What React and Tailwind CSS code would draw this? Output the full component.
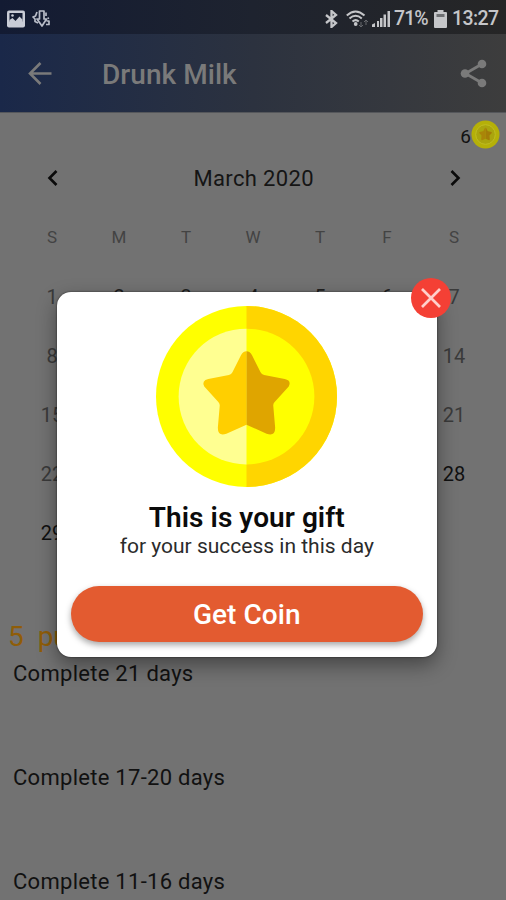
import React from "react";

const weekdays = ["S", "M", "T", "W", "T", "F", "S"];

const STAR_RIGHT =
  "M0-45Q3.500-45 5.500-41L14-24Q15-22 17.500-21.500L38-17.500Q45-16 42-10L28 5.500Q26.500 7 26.600 9L28.500 31Q28.500 40 20 37L0 28Z";

function Coin({ className }) {
  return (
    <svg className={className} viewBox="-90 -90 180 180">
      <circle r="90" fill="#ffff00" />
      <path d="M0-90A90 90 0 0 1 0 90Z" fill="#ffd500" />
      <circle r="67.500" fill="#ffff00" />
      <path d="M0-67.500A67.500 67.500 0 0 0 0 67.500Z" fill="#ffff91" />
      <path d={STAR_RIGHT} transform="scale(-1 1)" fill="#ffcf00" />
      <path d={STAR_RIGHT} fill="#dfa500" />
    </svg>
  );
}

function StatusBar() {
  return (
    <div className="flex h-[34px] items-center bg-linear-to-r from-[#131b33] via-[#1e232f] to-[#262626] pt-[3px] text-[#c5c6c9]">
      <svg className="ml-[7px] h-[18px] w-[18px]" viewBox="0 0 18 18">
        <rect width="18" height="17" y=".5" rx="2" fill="#c9ccd6" />
        <rect x="2.500" y="3" width="13" height="8.500" fill="#151d34" />
        <path d="M2.500 13V10l3-2 3 3 4-4.500 3 3V13Z" fill="#c9ccd6" />
        <circle cx="5.500" cy="5.500" r="1.300" fill="#c9ccd6" />
      </svg>
      <svg className="ml-[7px] h-[18px] w-[19px]" viewBox="0 0 19 18" fill="none" stroke="#b9bdc8" strokeWidth="1.700" strokeLinejoin="round">
        <path d="M7.500 9V1h4.500v8h2.500L10 16 5 9ZM5 2 3.500 6 1 7l2 2v2.500l3 1.500M14 2.500V6M16 7.500l.5 1.500M14.500 11h2.500v3.500h-3" />
      </svg>
      <div className="ml-auto flex items-center">
        <svg className="h-[18px] w-[13px]" viewBox="0 0 13 18" fill="none" stroke="currentColor" strokeWidth="2.300">
          <path d="M1 5l10 8-4.500 4V1L11 5 1 13" />
        </svg>
        <svg className="ml-[8px] h-[18px] w-[23px]" viewBox="0 0 23 18" fill="none" stroke="currentColor" strokeWidth="2">
          <path d="M.8 5.500Q9.500-2.500 18.500 5.500M3.500 8.500Q9.500 3 15.800 8.500M6.500 11.500Q9.700 8.800 12.800 11.500" />
          <circle cx="9.700" cy="14" r="1.900" fill="currentColor" stroke="none" />
          <path d="M15 12v5M13 15l2 2 2-2M20 15v-5M18 12l2-2 2 2" stroke="#66686d" strokeWidth="1" />
        </svg>
        <svg className="ml-[3px] h-[18px] w-[18px]" viewBox="0 0 18 18" fill="currentColor">
          <path d="M0 17v-2.500L3 13v4ZM5 17v-6h2v6ZM8 17V8h2.500v9ZM11.500 17V4.500H14V17ZM15.500 17V1H18v16Z" />
        </svg>
        <span className="ml-[4px] w-[36px] text-[19.500px] leading-[20px] font-medium tracking-[-0.900px] whitespace-nowrap">71%</span>
        <svg className="ml-[4px] h-[18px] w-[13px]" viewBox="0 0 13 18" fill="currentColor">
          <path d="M3.500 0h6v2H12q1 0 1 1v14q0 1-1 1H1q-1 0-1-1V3q0-1 1-1h2.500Z" />
          <path d="M2.500 4h8v3h-8Z" fill="#6d6f72" />
        </svg>
        <span className="mr-[7px] ml-[5px] w-[47px] text-[19.500px] leading-[20px] font-medium tracking-[-0.600px] whitespace-nowrap">13:27</span>
      </div>
    </div>
  );
}

function AppBar() {
  return (
    <div className="flex h-[79px] items-center border-b border-[#55575b] bg-linear-to-r from-[#1a2849] via-[#2c323f] to-[#3d3d3d] text-[#7a7a7a]">
      <svg className="ml-[28px] h-6 w-6" viewBox="0 0 24 24" fill="none" stroke="currentColor" strokeWidth="2.600">
        <path d="M23.500 12.500H2.500M12.500 2 2 12.500 12.500 23" />
      </svg>
      <h1 className="ml-[50px] pt-[3px] text-[28px] font-medium tracking-[0.050px]">Drunk Milk</h1>
      <svg className="mr-[19px] ml-auto h-[29px] w-[27px]" viewBox="0 0 27 29" fill="currentColor">
        <path d="M22 5 5.500 14.500 22 24" fill="none" stroke="currentColor" strokeWidth="2.800" />
        <circle cx="22" cy="5" r="4.300" />
        <circle cx="5" cy="14.500" r="4.300" />
        <circle cx="22" cy="24" r="4.300" />
      </svg>
    </div>
  );
}

function Chevron({ left }) {
  return (
    <svg className="h-[16px] w-[11px]" viewBox="0 0 11 16" fill="none" stroke="#0a0a0a" strokeWidth="2.600">
      <path d={left ? "M9.500 1 2.500 8l7 7" : "M1.500 1 8.500 8l-7 7"} />
    </svg>
  );
}

// Days behind the open dialog are hidden; past weekends are muted.
function dayClass(d) {
  const column = (d - 1) % 7;
  if (d > 7 && column > 0 && column < 6) return "invisible";
  if (d === 28 || d === 29) return "text-[#101010]";
  if (column === 0 || column === 6) return "text-[#3a3a3a]";
  return "text-[#202020]";
}

function Calendar() {
  const days = Array.from({ length: 31 }, (_, i) => i + 1);
  return (
    <div className="pl-[18.500px]">
      <div className="flex h-[46px] w-[469px] items-center justify-between pr-[26.500px] pl-[28px]">
        <Chevron left />
        <span className="text-[22px] tracking-[0.350px] text-[#151515]">March 2020</span>
        <Chevron />
      </div>
      <div className="mt-[7px] grid h-[59px] w-[469px] grid-cols-7 items-center text-center text-[17px] text-[#434343]">
        {weekdays.map((d, i) => (
          <span key={i}>{d}</span>
        ))}
      </div>
      <div className="grid w-[469px] auto-rows-[59px] grid-cols-7 items-center text-center text-[20px]">
        {days.map((d) => (
          <span key={d} className={dayClass(d)}>
            {d}
          </span>
        ))}
      </div>
    </div>
  );
}

function GiftDialog() {
  return (
    <div className="absolute top-[292px] left-[57px] flex h-[364.500px] w-[379.500px] flex-col items-center rounded-[14px] bg-white px-[14px] pt-[14px] shadow-[0_0_2px_rgba(0,0,0,0.7),0_8px_20px_rgba(0,0,0,0.4)]">
      <Coin className="h-[181px] w-[181px]" />
      <h2 className="mt-[12px] pt-px text-[28px] leading-[36px] font-semibold tracking-[0.060px] whitespace-nowrap text-[#0b0b0b]">This is your gift</h2>
      <p className="text-[21px] leading-[20px] whitespace-nowrap text-[#2b2b2b]">for your success in this day</p>
      <button className="mt-[30px] h-[56px] w-full shrink-0 rounded-full bg-[#e35b30] pt-[2px] text-[28px] font-medium tracking-[0.060px] text-white shadow-[0_3px_6px_rgba(0,0,0,0.35)]">
        Get Coin
      </button>
      <button className="absolute -top-[14px] -right-[14.500px] flex h-[40px] w-[40px] items-center justify-center rounded-full bg-[#f44035]">
        <svg className="h-5 w-5" viewBox="0 0 20 20" stroke="#ffd0cb" strokeWidth="2.700">
          <path d="M1 1l18 18M19 1 1 19" />
        </svg>
      </button>
    </div>
  );
}

export default function App() {
  return (
    <div className="relative h-[900px] w-[506px] overflow-hidden bg-[#727272] font-[Roboto,sans-serif]">
      <StatusBar />
      <AppBar />
      <div className="flex h-[42px] items-center justify-end pr-[6px]">
        <span className="pt-[6px] text-[19px] text-[#111111]">6</span>
        <svg className="h-[29px] w-[29px]" viewBox="0 0 29 29">
          <circle cx="14.500" cy="14.500" r="14" fill="#b5b008" />
          <circle cx="14.500" cy="14.500" r="9.800" fill="#aaa50e" stroke="#c0bd22" strokeWidth="1" />
          <g transform="translate(14.500 14.500) scale(.15)">
            <path d={STAR_RIGHT} fill="#a37c08" />
            <path d={STAR_RIGHT} transform="scale(-1 1)" fill="#aa8508" />
          </g>
        </svg>
      </div>
      <Calendar />
      <div className="mt-[57px] pl-[8px] text-[28px] leading-[36px] whitespace-pre text-[#8f5d08]">5  pu</div>
      <div className="mt-[6px] flex flex-col gap-[78px] pl-[13px] text-[22px] leading-[26px] tracking-[0.280px] text-[#111111]">
        <p>Complete 21 days</p>
        <p>Complete 17-20 days</p>
        <p>Complete 11-16 days</p>
      </div>
      <GiftDialog />
    </div>
  );
}
